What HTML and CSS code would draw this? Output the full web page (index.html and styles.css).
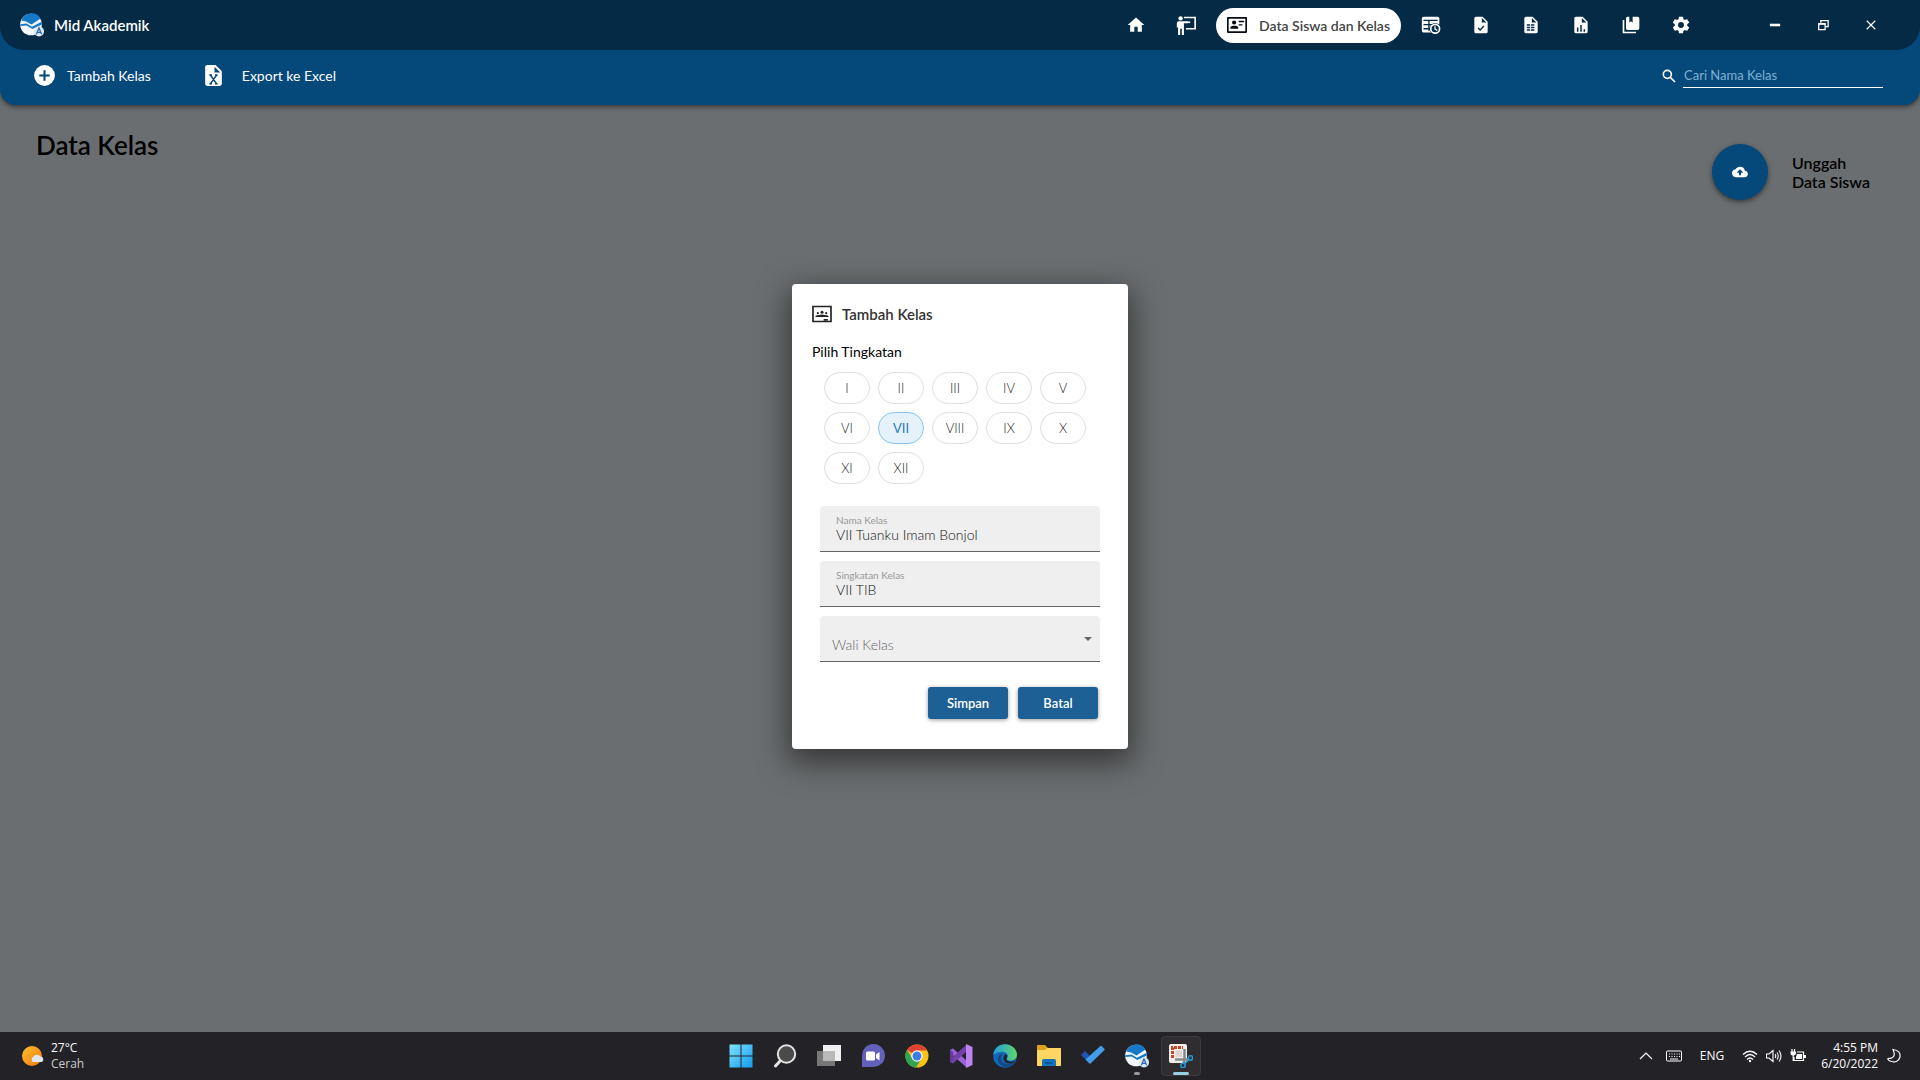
FILE: index.html
```html
<!DOCTYPE html>
<html lang="id">
<head>
    <meta charset="UTF-8">
    <meta name="viewport" content="width=device-width, initial-scale=1.0">
    <title>Mid Akademik</title>
    <link rel="stylesheet" href="styles.css">
</head>
<body>
    <!-- shared icon shapes -->
    <svg class="symbols" aria-hidden="true">
        <symbol id="logo" viewBox="0 0 24 24">
            <circle cx="11" cy="11.5" r="10.8" fill="#f2f8fd"/>
            <path d="M1.2 7.6A10.8 10.8 0 0 1 20.5 5.4L11.5 11.4 6 8.6Z" fill="#1878c8"/>
            <path d="M.3 11.3 6.5 10.6 12 13.8 21.6 8.8 21.8 11.5 12.3 16 6.6 12.6.3 13Z" fill="#1878c8"/>
            <circle cx="19" cy="18.4" r="5" fill="#dce9f5"/>
            <path d="M16.4 21.3 19 15l2.6 6.3M17.4 19.3h3.2" fill="none" stroke="#2c68b0" stroke-width="1.3"/>
        </symbol>
        <symbol id="file" viewBox="0 0 24 24">
            <path d="M13 9V3.5L18.5 9ZM6 2C4.89 2 4 2.89 4 4V20A2 2 0 0 0 6 22H18A2 2 0 0 0 20 20V8L14 2Z" fill="#fff" fill-rule="evenodd"/>
        </symbol>
    </svg>

    <div class="app">
        <header class="titlebar">
            <div class="brand">
                <svg class="brand-logo"><use href="#logo"/></svg>
                <span>Mid Akademik</span>
            </div>
            <nav class="menu">
                <button class="menu-item" aria-label="Beranda"><svg viewBox="0 0 24 24"><path d="M10 20V14H14V20H19V12H22L12 3 2 12H5V20Z" fill="#fff"/></svg></button>
                <button class="menu-item" aria-label="Guru"><svg viewBox="0 0 24 24" fill="none" stroke="#fff" stroke-width="2"><circle cx="5.5" cy="4" r="2.6" fill="#fff" stroke="none"/><path d="M1 15V10Q1 7.5 3.5 7.5H14V10H9.5V24H7V16.5H5V24H2.5V15Z" fill="#fff" stroke="none"/><path d="M9.5 3H23V16.5H12"/><path d="M12 8.7H17"/></svg></button>
                <button class="menu-item active"><svg viewBox="0 0 24 24"><path d="M23 3.5H1V20.5H23Z" fill="none" stroke="#050a14" stroke-width="2" stroke-linejoin="round"/><circle cx="8.5" cy="9" r="2.5" fill="#050a14"/><path d="M4 16.5V15C4 12 13.5 12 13.5 15V16.5ZM14 7H20.5V8.8H14ZM14 11H18.5V12.6H14Z" fill="#050a14"/></svg><span>Data Siswa dan Kelas</span></button>
                <button class="menu-item" aria-label="Jadwal"><svg viewBox="0 0 24 24"><path d="M3 2H20Q22 2 22 4V11H1V4Q1 2 3 2ZM1 10H12V21H3Q1 21 1 19Z" fill="#fff"/><path d="M3 6.5H20M3 11.5H20M3 16.5H12M9.5 6V19" stroke="#052a45" stroke-width="1.6"/><circle cx="17" cy="16.5" r="7" fill="#052a45"/><circle cx="17" cy="16.5" r="5.3" fill="none" stroke="#fff" stroke-width="2"/><path d="M16.8 13.5V17L19.5 18.5" stroke="#fff" stroke-width="1.5" fill="none"/></svg></button>
                <button class="menu-item" aria-label="Tugas"><svg viewBox="0 0 24 24"><use href="#file"/><path d="M8.5 15.5 11 18 15.5 13.3" fill="none" stroke="#052a45" stroke-width="1.6"/></svg></button>
                <button class="menu-item" aria-label="Nilai"><svg viewBox="0 0 24 24"><use href="#file"/><path d="M7 11H11V13H7ZM12 11H16V13H12ZM7 14H11V16H7ZM12 14H16V16H12ZM7 17H11V19H7ZM12 17H16V19H12Z" fill="#052a45"/></svg></button>
                <button class="menu-item" aria-label="Laporan"><svg viewBox="0 0 24 24"><use href="#file"/><path d="M8 20V15M12 20V12M16 20V17" stroke="#052a45" stroke-width="1.8"/></svg></button>
                <button class="menu-item" aria-label="Rapor"><svg viewBox="0 0 24 24"><path d="M3 6V21H18" fill="none" stroke="#fff" stroke-width="2"/><path d="M8 2H10V9L12 7.5 14 9V2H20Q22 2 22 4V16Q22 18 20 18H8Q6 18 6 16V4Q6 2 8 2Z" fill="#fff"/></svg></button>
                <button class="menu-item" aria-label="Pengaturan"><svg viewBox="0 0 24 24"><path d="M12 15.5A3.5 3.5 0 0 1 8.5 12 3.5 3.5 0 0 1 12 8.5 3.5 3.5 0 0 1 15.5 12 3.5 3.5 0 0 1 12 15.5M19.43 12.97C19.47 12.65 19.5 12.33 19.5 12S19.47 11.34 19.43 11L21.54 9.37C21.73 9.22 21.78 8.95 21.66 8.73L19.66 5.27C19.54 5.05 19.27 4.96 19.05 5.05L16.56 6.05C16.04 5.66 15.5 5.32 14.87 5.07L14.5 2.42C14.46 2.18 14.25 2 14 2H10C9.75 2 9.54 2.18 9.5 2.42L9.13 5.07C8.5 5.32 7.96 5.66 7.44 6.05L4.95 5.05C4.73 4.96 4.46 5.05 4.34 5.27L2.34 8.73C2.21 8.95 2.27 9.22 2.46 9.37L4.57 11C4.53 11.34 4.5 11.67 4.5 12S4.53 12.65 4.57 12.97L2.46 14.63C2.27 14.78 2.21 15.05 2.34 15.27L4.34 18.73C4.46 18.95 4.73 19.03 4.95 18.95L7.44 17.94C7.96 18.34 8.5 18.68 9.13 18.93L9.5 21.58C9.54 21.82 9.75 22 10 22H14C14.25 22 14.46 21.82 14.5 21.58L14.87 18.93C15.5 18.67 16.04 18.34 16.56 17.94L19.05 18.95C19.27 19.03 19.54 18.95 19.66 18.73L21.66 15.27C21.78 15.05 21.73 14.78 21.54 14.63Z" fill="#fff" fill-rule="evenodd"/></svg></button>
            </nav>
            <div class="window-buttons">
                <button aria-label="Minimize"><svg viewBox="0 0 14 14"><path d="M1 7H13" stroke="#fff" stroke-width="3"/></svg></button>
                <button aria-label="Restore"><svg viewBox="0 0 14 14" fill="none" stroke="#fff" stroke-width="1.5"><path d="M4.5 4.5V2H13V9H9.5M2 5.5H9.5V12.5H2Z"/><path d="M2 6H9.5"/></svg></button>
                <button aria-label="Close"><svg viewBox="0 0 14 14"><path d="M2 2 12 12M12 2 2 12" stroke="#fff" stroke-width="1.4"/></svg></button>
            </div>
        </header>

        <div class="toolbar">
            <button class="tool"><svg viewBox="0 0 24 24"><circle cx="12" cy="12" r="10" fill="#fff"/><path d="M12 7V17M7 12H17" stroke="#05487a" stroke-width="2"/></svg><span>Tambah Kelas</span></button>
            <button class="tool tool-excel"><svg viewBox="0 0 24 24"><use href="#file"/><path d="M8 11.5H10.5M13.5 11.5H16M8 20H10.5M13.5 20H16M9 11.5 15 20M15 11.5 9 20" fill="none" stroke="#05487a" stroke-width="1.4"/></svg><span>Export ke Excel</span></button>
            <div class="search">
                <svg viewBox="0 0 24 24" fill="none" stroke="#fff" stroke-width="2.4"><circle cx="9.5" cy="9.5" r="6"/><path d="M14 14 21 21"/></svg>
                <input type="text" placeholder="Cari Nama Kelas" aria-label="Cari Nama Kelas">
            </div>
        </div>

        <main class="content">
            <h1>Data Kelas</h1>
            <div class="upload">
                <button id="upload" class="upload-button" aria-label="Unggah Data Siswa"><svg viewBox="0 0 24 24"><path d="M19.35 10.04A7.49 7.49 0 0 0 12 4C9.11 4 6.6 5.64 5.35 8.04A5.99 5.99 0 0 0 0 14C0 17.31 2.69 20 6 20H19A5 5 0 0 0 19.35 10.04ZM13.5 13V17H10.5V13H7L12 8 17 13Z" fill="#fff" fill-rule="evenodd"/></svg></button>
                <label for="upload">Unggah<br>Data Siswa</label>
            </div>
        </main>

        <div class="overlay">
            <form class="modal" role="dialog" aria-labelledby="modal-title">
                <div class="modal-header">
                    <svg viewBox="0 0 24 24"><path d="M1.2 3H22.8V21H1.2Z" fill="none" stroke="#222" stroke-width="2"/><circle cx="12" cy="10" r="1.8" fill="#222"/><circle cx="7" cy="11" r="1.3" fill="#222"/><circle cx="17" cy="11" r="1.3" fill="#222"/><path d="M4 15.5Q4 13 7 13.5L12 12.5 17 13.5Q20 13 20 15.5ZM14 18H19V20H14Z" fill="#222"/></svg>
                    <h2 id="modal-title">Tambah Kelas</h2>
                </div>
                <fieldset class="levels">
                    <legend>Pilih Tingkatan</legend>
                    <div class="chips">
                        <button type="button" class="chip">I</button>
                        <button type="button" class="chip">II</button>
                        <button type="button" class="chip">III</button>
                        <button type="button" class="chip">IV</button>
                        <button type="button" class="chip">V</button>
                        <button type="button" class="chip">VI</button>
                        <button type="button" class="chip selected">VII</button>
                        <button type="button" class="chip">VIII</button>
                        <button type="button" class="chip">IX</button>
                        <button type="button" class="chip">X</button>
                        <button type="button" class="chip">XI</button>
                        <button type="button" class="chip">XII</button>
                    </div>
                </fieldset>
                <div class="fields">
                    <div class="field">
                        <label for="nama">Nama Kelas</label>
                        <input type="text" id="nama" value="VII Tuanku Imam Bonjol">
                    </div>
                    <div class="field">
                        <label for="singkatan">Singkatan Kelas</label>
                        <input type="text" id="singkatan" value="VII TIB">
                    </div>
                    <div class="field field-select">
                        <select id="wali" aria-label="Wali Kelas">
                            <option>Wali Kelas</option>
                        </select>
                        <svg viewBox="0 0 8 4"><path d="M0 0H8L4 4Z" fill="#666"/></svg>
                    </div>
                </div>
                <div class="actions">
                    <button type="button">Simpan</button>
                    <button type="button">Batal</button>
                </div>
            </form>
        </div>
    </div>

    <footer class="taskbar">
        <div class="weather">
            <svg viewBox="0 0 24 24"><defs><linearGradient id="sun" x1="0" y1="0" x2="1" y2="1"><stop offset="0" stop-color="#fcc02a"/><stop offset="1" stop-color="#ee7c13"/></linearGradient></defs><circle cx="12" cy="12" r="10" fill="url(#sun)"/><path d="M13 18A3 3 0 0 1 13 13 4.5 4.5 0 0 1 20.5 12.500 3 3 0 0 1 22 18Z" fill="#dfe6f2"/></svg>
            <div>27°C<span>Cerah</span></div>
        </div>
        <div class="apps">
            <button aria-label="Start"><svg viewBox="0 0 24 24"><defs><linearGradient id="win" x1="0" y1="0" x2="1" y2="1"><stop offset="0" stop-color="#7fe3fc"/><stop offset="1" stop-color="#129af0"/></linearGradient></defs><path d="M.5.5H11.5V11.5H.5ZM12.5.5H23.5V11.5H12.5ZM.5 12.5H11.5V23.5H.5ZM12.5 12.5H23.5V23.5H12.5Z" fill="url(#win)"/></svg></button>
            <button aria-label="Search"><svg viewBox="0 0 24 24"><path d="M2.5 22 8 16" stroke="#e4e4e4" stroke-width="3" stroke-linecap="round"/><circle cx="13.5" cy="10" r="8.7" fill="#4b4b4c" stroke="#e4e4e4" stroke-width="2"/></svg></button>
            <button aria-label="Task view"><svg viewBox="0 0 24 24"><path d="M6 1H24V17H6Z" fill="#f0f0f0"/><path d="M0 7H18V22H0Z" fill="#777"/><path d="M6 7H18V17H6Z" fill="#b9b9b9"/></svg></button>
            <button aria-label="Chat"><svg viewBox="0 0 24 24"><path d="M1 23V12A11.5 11.5 0 1 1 12 23Z" fill="#6461bd"/><rect x="5" y="7.5" width="9" height="9" rx="1.5" fill="#fff"/><path d="M15 10.5 18.5 8V16.5L15 14Z" fill="#fff"/></svg></button>
            <button aria-label="Chrome"><svg viewBox="0 0 24 24"><circle cx="12" cy="12" r="11.5" fill="#fbc116"/><path d="M12 12 2 6A11.5 11.5 0 0 1 22 6.5H12Z" fill="#dd4134"/><path d="M12 12 7.5 14.8 2 6A11.5 11.5 0 0 0 11 23.5L16.5 14.5Z" fill="#2fa552"/><circle cx="12" cy="12" r="5.7" fill="#fff"/><circle cx="12" cy="12" r="4.5" fill="#3b7de8"/></svg></button>
            <button aria-label="Visual Studio"><svg viewBox="0 0 24 24"><path d="M1 6 4 4.5 17 16V23L1 8.5Z" fill="#9c62da"/><path d="M1 18 4 19.5 17 8V1L1 15.5Z" fill="#7141a8"/><path d="M1 6 4 8V16L1 18Z" fill="#65379a"/><path d="M17 0 23.5 3V21L17 24Z" fill="#bd83f1"/></svg></button>
            <button aria-label="Edge"><svg viewBox="0 0 24 24"><defs><linearGradient id="edge" x1="0" y1="0" x2="1" y2="0"><stop offset="0" stop-color="#229be1"/><stop offset="1" stop-color="#5fd768"/></linearGradient></defs><circle cx="12" cy="12" r="11.8" fill="#1767b9"/><path d="M.3 11C1 4 6 .2 12 .2S24 5 24 10.5C24 15 20 17 16.5 16.5 14 16 13.5 15 14.5 13.5 17 8 7 5 .3 11Z" fill="url(#edge)"/><path d="M9.5 10C5 17 12 23 21 18.5 18 24 8 25.5 5 17 4 13 6 10 9.5 10Z" fill="#124a87"/><path d="M14 13Q12 16.5 16 17.5T22.5 16L20.5 19Q12 21 10.5 15 10 12 12 10.5 15 10.5 14 13Z" fill="#232227"/></svg></button>
            <button aria-label="File Explorer"><svg viewBox="0 0 24 24"><path d="M0 2Q0 1 1 1H8L11 4H23Q24 4 24 5V21Q24 22 23 22H1Q0 22 0 21Z" fill="#e0a11b"/><path d="M0 6H8L10 4H23Q24 4 24 5V21Q24 22 23 22H1Q0 22 0 21Z" fill="#ffd661"/><path d="M5 22V17Q5 15 7 15H17Q19 15 19 17V22Z" fill="#1374bd"/><path d="M8 19H16" stroke="#0a5799" stroke-width="2"/></svg></button>
            <button aria-label="To Do"><svg viewBox="0 0 24 24"><path d="M0 11 4 7 12 15 8 19Z" fill="#1c57b7"/><path d="M8 19 4.5 15.5 20 1.5 24 5.5 9 20Z" fill="#429ee9"/></svg></button>
            <button class="running" aria-label="Mid Akademik"><svg><use href="#logo"/></svg></button>
            <button class="running current" aria-label="Snipping Tool"><svg viewBox="0 0 24 24"><rect width="18" height="19" rx="2" fill="#f4eeea"/><path d="M3.5 14V3.5H14" fill="none" stroke="#c4462a" stroke-width="3" stroke-dasharray="3 1"/><path d="M6.5 6.5H13V13H6.5Z" fill="#ddd3cf"/><path d="M15.5 5V16L14.5 20M6 15.5H20" fill="none" stroke="#85898f" stroke-width="2.5"/><circle cx="21.5" cy="14" r="2.2" fill="none" stroke="#2697d3" stroke-width="1.6"/><circle cx="14" cy="21.5" r="2.2" fill="none" stroke="#2697d3" stroke-width="1.6"/><path d="M15.5 20 20 15.5" stroke="#2697d3" stroke-width="1.6"/></svg></button>
        </div>
        <div class="tray">
            <svg viewBox="0 0 16 16"><path d="M2 11 8 5 14 11" fill="none" stroke="#fff" stroke-width="1.2"/></svg>
            <svg viewBox="0 0 16 16" fill="none" stroke="#fff"><rect x=".5" y="3" width="15" height="10" rx="1"/><path d="M3 6H14M3 8.5H14" stroke-dasharray="1 1.5"/><path d="M4 11H12"/></svg>
            <span class="lang">ENG</span>
            <div class="status">
                <svg viewBox="0 0 16 16" fill="none" stroke="#fff" stroke-width="1.3"><path d="M1 6.5Q8 0 15 6.5M3 9Q8 4 13 9M5 11.5Q8 8.5 11 11.5"/><circle cx="8" cy="13" r="1.2" fill="#fff" stroke="none"/></svg>
                <svg viewBox="0 0 16 16" fill="none" stroke="#fff" stroke-width="1.1"><path d="M.5 6H3L7 2.5V13.5L3 10H.5ZM9 6Q10.5 8 9 10M11 4.5Q13.5 8 11 11.5M13 2.5Q17 8 13 13.5"/></svg>
                <svg viewBox="0 0 16 16" fill="none" stroke="#fff" stroke-width="1.2"><path d="M7 4H13.5V12.5H4V9"/><path d="M7 6H12V11H6V9ZM14 7H16V10H14ZM.5 3.5H6V5Q6 7.5 3.2 7.5T.5 5Z" fill="#fff" stroke="none"/><path d="M2 1V4M4.5 1V4M3.2 7V12.5H5"/></svg>
            </div>
            <div class="clock">4:55 PM<span>6/20/2022</span></div>
            <svg viewBox="0 0 16 16"><path d="M7 1.5Q15 2.5 14 9 12 16 4 13 1.5 12 2 10.5 11 10.5 7 1.5Z" fill="none" stroke="#fff" stroke-width="1.2"/></svg>
        </div>
    </footer>
</body>
</html>
```

FILE: styles.css
```css
* {
    box-sizing: border-box;
}
body {
    margin: 0;
    min-height: 100vh;
    display: flex;
    flex-direction: column;
    font-family: Lato, "Open Sans", sans-serif;
    font-size: 14px;
    background-color: #6b6e70;
}
button {
    padding: 0;
    border: none;
    background: none;
    font-family: inherit;
    cursor: pointer;
}
svg {
    display: block;
    flex-shrink: 0;
}
.symbols {
    position: absolute;
    width: 0;
    height: 0;
}
.app {
    position: relative;
    flex: 1;
    display: flex;
    flex-direction: column;
}

/* title bar, lies over the top of the toolbar */
.titlebar {
    position: relative;
    z-index: 1;
    display: flex;
    align-items: center;
    height: 50px;
    padding: 0 25px 0 20px;
    border-radius: 0 0 24px 24px;
    background: #052a45;
    color: #fff;
}
.brand {
    display: flex;
    align-items: center;
    gap: 10px;
    margin-right: auto;
    font-size: 15px;
    font-weight: 600;
}
.brand-logo {
    width: 24px;
    height: 24px;
}
.menu {
    display: flex;
    align-items: center;
}
.menu-item {
    display: flex;
    align-items: center;
    justify-content: center;
    width: 50px;
    height: 35px;
}
.menu-item svg {
    width: 20px;
    height: 20px;
}
.menu-item.active {
    gap: 12px;
    width: auto;
    margin: 0 5px;
    padding: 0 11px;
    border-radius: 18px;
    background: #fff;
    color: #444;
    font-size: 14px;
    font-weight: 600;
}
.window-buttons {
    display: flex;
    margin-left: 45px;
}
.window-buttons button {
    display: flex;
    align-items: center;
    justify-content: center;
    width: 48px;
    height: 35px;
}
.window-buttons svg {
    width: 12px;
    height: 12px;
}

/* toolbar */
.toolbar {
    display: flex;
    align-items: center;
    height: 105px;
    margin-top: -50px;
    padding: 50px 37px 4px 32px;
    border-radius: 0 0 16px 16px;
    background: #05487a;
    box-shadow: 0 2px 5px rgba(0, 0, 0, 0.5);
}
.tool {
    display: flex;
    align-items: center;
    gap: 10px;
    color: #fff;
    font-size: 14px;
}
.tool svg {
    width: 25px;
    height: 25px;
}
.tool-excel {
    gap: 16px;
    margin-left: 50px;
}
.search {
    display: flex;
    align-items: center;
    gap: 6px;
    margin-left: auto;
}
.search svg {
    width: 16px;
    height: 16px;
}
.search input {
    width: 200px;
    height: 24px;
    padding: 0 1px;
    border: none;
    border-bottom: 1px solid #fff;
    outline: none;
    background: none;
    color: #fff;
    font-family: inherit;
    font-size: 13px;
}
.search input::placeholder {
    color: #7fb0d3;
}

/* page */
.content {
    display: flex;
    justify-content: space-between;
    align-items: flex-start;
    padding: 24px 50px 0 36px;
}
.content h1 {
    margin: 0;
    font-size: 26px;
    line-height: 32px;
    font-weight: 600;
}
.upload {
    display: flex;
    align-items: center;
    gap: 24px;
    margin-top: 15px;
}
.upload-button {
    display: flex;
    align-items: center;
    justify-content: center;
    width: 56px;
    height: 56px;
    border-radius: 50%;
    background: #05487a;
    box-shadow: 0 2px 5px rgba(0, 0, 0, 0.5);
}
.upload-button svg {
    width: 16px;
    height: 16px;
}
.upload label {
    font-size: 16px;
    line-height: 19px;
    font-weight: 600;
}

/* add class dialog */
.overlay {
    position: absolute;
    inset: 0;
    display: flex;
    align-items: center;
    justify-content: center;
}
.modal {
    width: 336px;
    padding: 20px 20px 30px;
    border-radius: 4px;
    background: #fff;
    box-shadow: 0 10px 30px 4px rgba(0, 0, 0, 0.5);
}
.modal-header {
    display: flex;
    align-items: center;
    gap: 10px;
    color: #333;
}
.modal-header svg {
    width: 20px;
    height: 20px;
}
.modal-header h2 {
    margin: 0;
    font-size: 15px;
    line-height: 20px;
    font-weight: 600;
}
.levels {
    margin: 18px 0 0;
    padding: 0;
    border: none;
}
.levels legend {
    padding: 0;
    font-size: 14px;
    line-height: 20px;
}
.chips {
    display: flex;
    flex-wrap: wrap;
    gap: 8px;
    padding: 10px 8px 0 12px;
}
.chip {
    width: 46px;
    height: 32px;
    border: 1px solid #ddd;
    border-radius: 16px;
    color: #222;
    font-size: 13px;
    font-weight: 300;
}
.chip.selected {
    border-color: #8cc4e8;
    background: #e6f2fb;
    color: #2a7ab5;
    font-weight: 400;
}
.fields {
    display: flex;
    flex-direction: column;
    gap: 9px;
    margin-top: 22px;
    padding: 0 8px;
}
.field {
    position: relative;
    height: 46px;
    padding: 9px 16px 0;
    border-bottom: 1px solid #666;
    border-radius: 4px 4px 0 0;
    background: #efefef;
}
.field label {
    display: block;
    color: #999;
    font-size: 10px;
    line-height: 11px;
}
.field input,
.field select {
    display: block;
    width: 100%;
    height: 18px;
    padding: 0;
    border: none;
    outline: none;
    background: none;
    color: #111;
    font-family: inherit;
    font-size: 14px;
    font-weight: 300;
}
.field-select {
    padding: 0;
}
.field-select select {
    height: 45px;
    padding: 13px 12px 0;
    appearance: none;
    color: #666;
}
.field-select svg {
    position: absolute;
    top: 21px;
    right: 8px;
    width: 8px;
    height: 4px;
    pointer-events: none;
}
.actions {
    display: flex;
    justify-content: flex-end;
    gap: 10px;
    margin-top: 25px;
    padding-right: 10px;
}
.actions button {
    width: 80px;
    height: 32px;
    border-radius: 3px;
    background: #1d6096;
    box-shadow: 0 1px 4px rgba(0, 0, 0, 0.4);
    color: #fff;
    font-size: 13px;
    font-weight: 600;
}

/* windows taskbar */
.taskbar {
    display: grid;
    grid-template-columns: 1fr auto 1fr;
    align-items: center;
    height: 48px;
    padding: 0 18px 0 20px;
    background: #232227;
    color: #fff;
    font-family: "Open Sans", sans-serif;
    font-size: 12px;
    line-height: 16px;
}
.weather {
    display: flex;
    align-items: center;
    gap: 7px;
}
.weather svg {
    width: 24px;
    height: 24px;
}
.weather span,
.clock span {
    display: block;
}
.weather span {
    color: #ccc;
}
.apps {
    display: flex;
    gap: 4px;
}
.apps button {
    display: flex;
    align-items: center;
    justify-content: center;
    position: relative;
    width: 40px;
    height: 40px;
    border-radius: 4px;
}
.apps svg {
    width: 24px;
    height: 24px;
}
.running::after {
    content: "";
    position: absolute;
    bottom: 1px;
    width: 6px;
    height: 3px;
    border-radius: 2px;
    background: #999;
}
.apps .current {
    border: 1px solid #3d3a3d;
    background: #302d30;
}
.current::after {
    bottom: 0;
    width: 16px;
    background: #9acfe0;
}
.tray {
    display: flex;
    align-items: center;
    justify-content: flex-end;
}
.tray svg {
    width: 16px;
    height: 16px;
}
.tray > svg:first-child {
    margin-right: 12px;
}
.lang {
    margin: 0 18px;
}
.status {
    display: flex;
    gap: 8px;
    margin-right: 15px;
}
.clock {
    margin-right: 8px;
    text-align: right;
}
```
